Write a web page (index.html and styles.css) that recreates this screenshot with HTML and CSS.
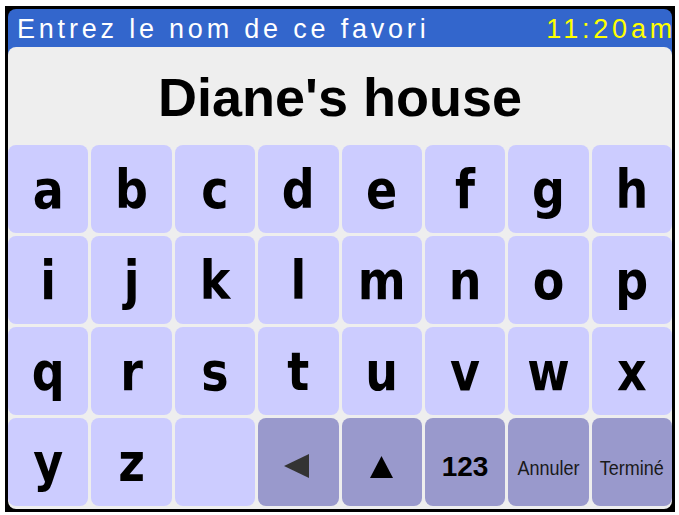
FILE: index.html
```html
<!DOCTYPE html>
<html lang="fr">
<head>
<meta charset="utf-8">
<title>Nom du favori</title>
<link rel="stylesheet" href="styles.css">
</head>
<body>
<div class="device">
  <div class="screen">
    <header class="titlebar">
      <span class="prompt">Entrez le nom de ce favori</span>
      <span class="clock">11:20am</span>
    </header>
    <main class="panel">
      <div class="entry">Diane's house</div>
      <div class="keys">
        <div class="key"><span class="glyph">a</span></div>
        <div class="key"><span class="glyph">b</span></div>
        <div class="key"><span class="glyph">c</span></div>
        <div class="key"><span class="glyph">d</span></div>
        <div class="key"><span class="glyph">e</span></div>
        <div class="key"><span class="glyph">f</span></div>
        <div class="key"><span class="glyph">g</span></div>
        <div class="key"><span class="glyph">h</span></div>
        <div class="key"><span class="glyph">i</span></div>
        <div class="key"><span class="glyph">j</span></div>
        <div class="key"><span class="glyph">k</span></div>
        <div class="key"><span class="glyph">l</span></div>
        <div class="key"><span class="glyph">m</span></div>
        <div class="key"><span class="glyph">n</span></div>
        <div class="key"><span class="glyph">o</span></div>
        <div class="key"><span class="glyph">p</span></div>
        <div class="key"><span class="glyph">q</span></div>
        <div class="key"><span class="glyph">r</span></div>
        <div class="key"><span class="glyph">s</span></div>
        <div class="key"><span class="glyph">t</span></div>
        <div class="key"><span class="glyph">u</span></div>
        <div class="key"><span class="glyph">v</span></div>
        <div class="key"><span class="glyph">w</span></div>
        <div class="key"><span class="glyph">x</span></div>
        <div class="key"><span class="glyph">y</span></div>
        <div class="key"><span class="glyph">z</span></div>
        <div class="key"></div>
        <div class="key key-fn">
          <svg class="icon-back" width="25" height="24" viewBox="0 0 25 24"><polygon points="0,12 25,0 25,24" fill="#333"/></svg>
        </div>
        <div class="key key-fn">
          <svg class="icon-shift" width="23" height="22" viewBox="0 0 23 22"><polygon points="11.5,0 23,22 0,22" fill="#000"/></svg>
        </div>
        <div class="key key-fn key-num">123</div>
        <div class="key key-fn key-word"><span class="word">Annuler</span></div>
        <div class="key key-fn key-word"><span class="word">Terminé</span></div>
      </div>
    </main>
  </div>
</div>
</body>
</html>
```
FILE: styles.css
```css
html, body {
  margin: 0;
  padding: 0;
  background: #fff;
}

/* black bezel around the device screen */
.device {
  margin: 6px 0 0 5px;
  width: 664px;
  height: 500px;
  border: 3px solid #000;
  background: #000;
}

.screen {
  height: 100%;
  display: flex;
  flex-direction: column;
  border-radius: 8px 8px 0 0;
  background: linear-gradient(to bottom, #3366cc 0 60px, #000 60px);
}

.titlebar {
  height: 38px;
  flex: none;
  display: flex;
  align-items: flex-end;
  justify-content: space-between;
  padding: 0 0 4px 9px;
  box-sizing: border-box;
  font-family: "Liberation Sans", Arial, sans-serif;
  font-size: 27px;
  line-height: 1;
  letter-spacing: 3.8px;
}

.prompt {
  color: #fff;
}

.clock {
  color: #ffff00;
  margin-right: -4px;
}

.panel {
  flex: 1;
  display: flex;
  flex-direction: column;
  background: #eeeeee;
  border-radius: 8px;
  padding-bottom: 3px;
}

.entry {
  height: 98px;
  flex: none;
  display: flex;
  align-items: center;
  justify-content: center;
  font-family: "Liberation Sans", Arial, sans-serif;
  font-weight: bold;
  font-size: 54px;
  line-height: 1;
  color: #000;
  padding-top: 2px;
  box-sizing: border-box;
}

.keys {
  flex: 1;
  display: grid;
  grid-template-columns: repeat(8, 1fr);
  grid-template-rows: repeat(4, 1fr);
  gap: 3px;
}

.key {
  display: flex;
  align-items: center;
  justify-content: center;
  background: #ccccff;
  border-radius: 8px;
  font-family: "DejaVu Sans", Verdana, sans-serif;
  font-weight: bold;
  font-size: 46px;
  line-height: 1;
  color: #000;
  padding-top: 2px;
  box-sizing: border-box;
}

/* the letter faces are drawn a little taller than the stock font */
.glyph {
  display: inline-block;
  transform: scaleY(1.15);
}

.key-fn {
  background: #9999cc;
  padding-top: 8px;
}

.key-num {
  font-family: "Liberation Sans", Arial, sans-serif;
  font-size: 28px;
  padding-top: 10px;
}

.key-word {
  font-family: "Liberation Sans", Arial, sans-serif;
  font-weight: normal;
  font-size: 18px;
  color: #1a1a1a;
  padding-top: 12px;
}

.word {
  display: inline-block;
  transform: scaleY(1.15);
}

.icon-back {
  margin-left: -4px;
}

.icon-shift {
  margin-top: 2px;
}
```
